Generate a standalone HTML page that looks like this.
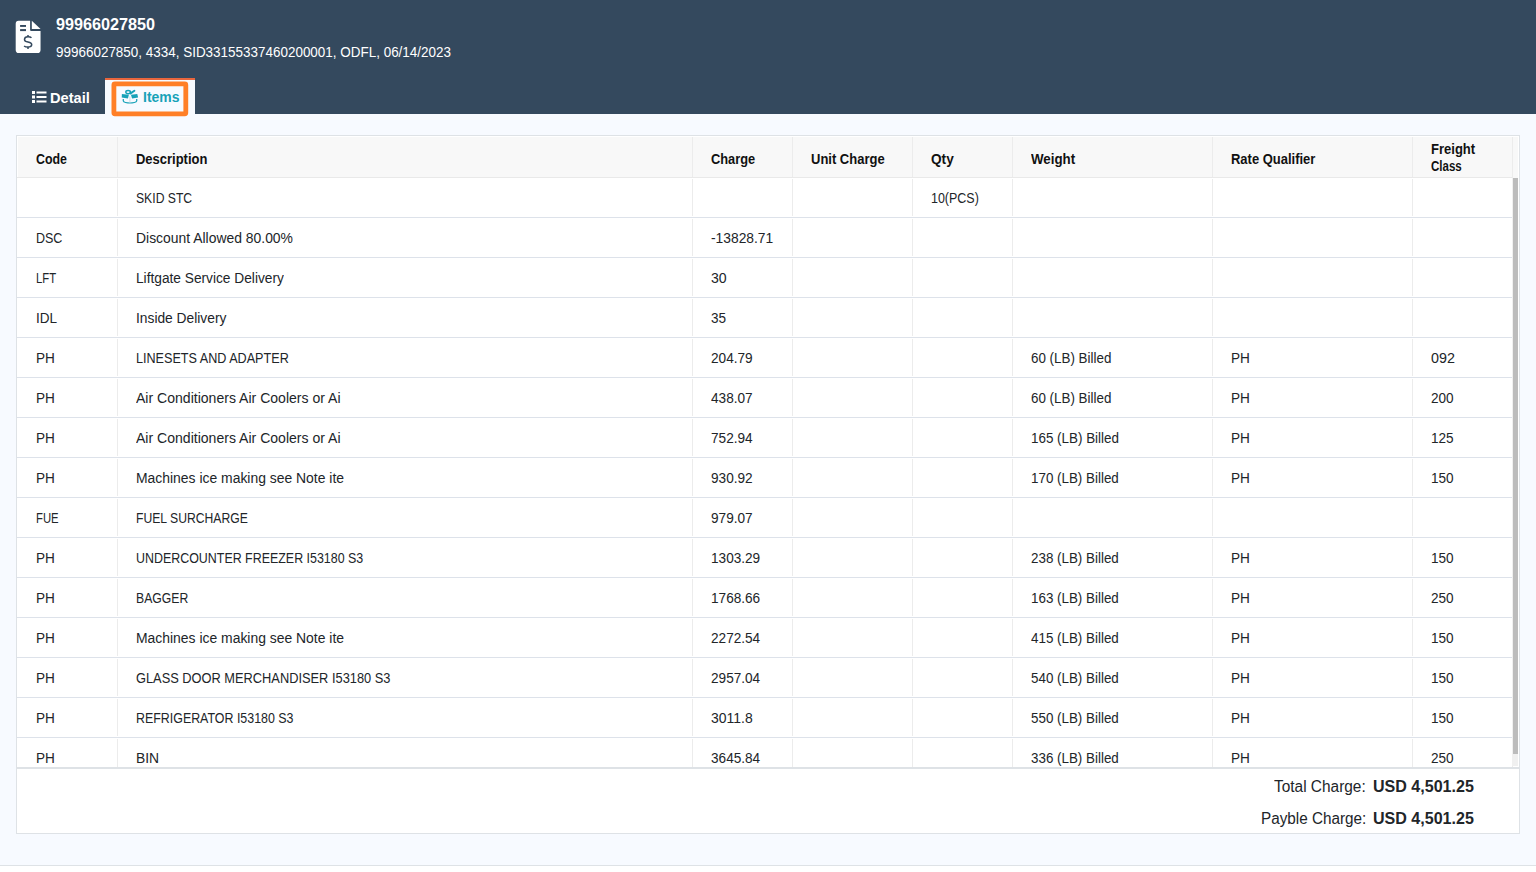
<!DOCTYPE html>
<html><head><meta charset="utf-8">
<style>
*{box-sizing:border-box}
html,body{margin:0;padding:0;width:1536px;height:872px;overflow:hidden;background:#fff;font-family:"Liberation Sans",sans-serif;color:#212529}
.s{display:inline-block;transform-origin:0 0;white-space:nowrap}
.ab{position:absolute;line-height:1;white-space:nowrap}
.page{position:absolute;left:0;top:0;width:1536px;height:866px;background:#f7faff;border-bottom:1px solid #dee2e6}
.hdr{position:absolute;left:0;top:0;width:1536px;height:114px;background:#34495e;color:#fff}
.inv{position:absolute;left:12px;top:18px}
.tab-items{position:absolute;left:105px;top:78px;width:90px;height:36px;background:#f7faff;border-top:2px solid #e8663d}
.focus{position:absolute;left:0;top:0}
.boxic{position:absolute;left:118px;top:86px}
.card{position:absolute;left:16px;top:135px;width:1504px;height:699px;background:#fff;border:1px solid #dee2e6}
.thead{position:absolute;left:1px;top:1px;width:1500px;height:41px;background:#f8f8f8}
.thl{position:absolute;left:0;top:41px;width:1495px;height:1px;background:#e9e9e9}
.hc{position:absolute;font-size:14px;font-weight:bold;line-height:1;white-space:nowrap;padding-left:18.5px;color:#111}
.bc{position:absolute;font-size:14px;line-height:1;white-space:nowrap;padding-left:18.5px}
.vl{position:absolute;width:1px;background:#ececec}
.hl{position:absolute;left:0;width:1495px;height:1px;background:#dde2ea}
.body{position:absolute;left:0;top:0;width:1496px;height:631px;overflow:hidden}
.sb{position:absolute;left:1495px;top:42px;width:6px;height:588px;background:#f0f0f0}
.thumb{position:absolute;left:1px;top:0;width:5px;height:576px;background:#bcbcbc}
.foot{position:absolute;left:0;top:631px;width:1502px;height:2px;background:#dee2e6}
</style></head><body>
<div class="page"></div>
<div class="hdr">
<svg class="inv" width="32" height="38" viewBox="0 0 32 38">
<path fill="#fff" d="M6.6 2.8 H18.1 V11.9 Q18.1 12.9 19.1 12.9 H28.55 V32.0 Q28.55 35.1 25.45 35.1 H6.8 Q3.7 35.1 3.7 32.0 V5.7 Q3.7 2.8 6.6 2.8 Z"/>
<path fill="#fff" d="M19.8 2.8 L28.55 11.1 H19.8 Z"/>
<rect x="8.1" y="7.0" width="5.9" height="1.9" fill="#34495e"/>
<rect x="8.1" y="11.1" width="5.9" height="2.0" fill="#34495e"/>
<path d="M19.5 19.7 Q18.4 18.7 16 18.7 Q12.5 18.7 12.5 21.4 Q12.5 23.4 16 24.0 Q19.7 24.6 19.7 26.6 Q19.7 29.1 16 29.1 Q13.3 29.1 12.1 28.0" fill="none" stroke="#34495e" stroke-width="1.5"/>
<path d="M16 16.9 V18.9 M16 28.9 V31.0" stroke="#34495e" stroke-width="1.5"/>
</svg>
<div class="ab" style="left:56px;top:17px;font-size:16px;font-weight:bold"><span class="s" style="transform:scaleX(1.0125)">99966027850</span></div>
<div class="ab" style="left:56px;top:45px;font-size:14px;font-weight:normal"><span class="s" style="transform:scaleX(0.9610)">99966027850, 4334, SID33155337460200001, ODFL, 06/14/2023</span></div>
<svg width="15" height="12" style="position:absolute;left:32px;top:91px"><rect x="0" y="0" width="3" height="3" fill="#fff"/><rect x="0" y="4.5" width="3" height="3" fill="#fff"/><rect x="0" y="9" width="3" height="3" fill="#fff"/><rect x="4.5" y="0.5" width="10" height="2" fill="#fff"/><rect x="4.5" y="5" width="10" height="2" fill="#fff"/><rect x="4.5" y="9.5" width="10" height="2" fill="#fff"/></svg>
<div class="ab" style="left:50px;top:90.7px;font-size:14px;font-weight:bold"><span class="s" style="transform:scaleX(1.0444)">Detail</span></div>
</div>
<div class="tab-items"></div>
<svg class="boxic" width="24" height="22" viewBox="0 0 24 22">
<ellipse cx="10.1" cy="6.1" rx="2.3" ry="1.65" fill="none" stroke="#17a2b8" stroke-width="1.45"/>
<path d="M12.5 7.4 L16.4 4.7" stroke="#17a2b8" stroke-width="2.0" stroke-linecap="round"/>
<g fill="#17a2b8">
<path d="M3.9 8.1 L10.9 8.7 L9.9 12.6 L3.7 11.6 Z"/>
<path d="M12.9 8.7 L19.3 8.1 L20.1 11.6 L14.1 12.6 Z"/>
</g>
<path d="M5.3 12.9 V14.9 Q5.5 16.0 7.5 16.5 Q11.9 17.5 16.4 16.5 Q18.5 16.0 18.7 14.9 V12.9" fill="none" stroke="#17a2b8" stroke-width="1.25"/>
<path d="M11.9 10.4 V16.6" stroke="#bcd3dc" stroke-width="0.7"/>
</svg>
<div class="ab" style="left:143px;top:90px;font-size:14px;font-weight:bold;color:#17a2b8"><span class="s" style="transform:scaleX(0.9971)">Items</span></div>
<svg class="focus" width="200" height="130"><rect x="113.9" y="83.9" width="71.9" height="29.9" rx="1" fill="none" stroke="#ff7f27" stroke-width="4.8"/></svg>
<div class="card">
 <div class="thead"><div class="hc" style="left:-1px;width:100px;top:15px"><span class="s" style="transform:scaleX(0.8824)">Code</span></div><div class="vl" style="left:99px;top:0px;height:41px"></div><div class="hc" style="left:99.2px;width:574px;top:15px"><span class="s" style="transform:scaleX(0.9267)">Description</span></div><div class="vl" style="left:674px;top:0px;height:41px"></div><div class="hc" style="left:674.2px;width:99px;top:15px"><span class="s" style="transform:scaleX(0.9149)">Charge</span></div><div class="vl" style="left:774px;top:0px;height:41px"></div><div class="hc" style="left:774.2px;width:119px;top:15px"><span class="s" style="transform:scaleX(0.9282)">Unit Charge</span></div><div class="vl" style="left:894px;top:0px;height:41px"></div><div class="hc" style="left:894.2px;width:99px;top:15px"><span class="s" style="transform:scaleX(0.9727)">Qty</span></div><div class="vl" style="left:994px;top:0px;height:41px"></div><div class="hc" style="left:994.2px;width:199px;top:15px"><span class="s" style="transform:scaleX(0.9511)">Weight</span></div><div class="vl" style="left:1194px;top:0px;height:41px"></div><div class="hc" style="left:1194.2px;width:199px;top:15px"><span class="s" style="transform:scaleX(0.9267)">Rate Qualifier</span></div><div class="vl" style="left:1394px;top:0px;height:41px"></div><div class="hc" style="left:1394.7px;width:99px;top:4.4px;line-height:16.5px"><span class="s" style="transform:scaleX(0.9304)">Freight</span><br><span class="s" style="transform:scaleX(0.8222)">Class</span></div><div class="vl" style="left:1494px;top:0px;height:41px"></div></div>
 <div class="thl"></div>
 <div class="body"><div class="vl" style="left:100px;top:43px;height:37px"></div><div class="bc" style="left:100.2px;top:55px"><span class="s" style="transform:scaleX(0.8698)">SKID STC</span></div><div class="vl" style="left:675px;top:43px;height:37px"></div><div class="vl" style="left:775px;top:43px;height:37px"></div><div class="vl" style="left:895px;top:43px;height:37px"></div><div class="bc" style="left:895.2px;top:55px"><span class="s" style="transform:scaleX(0.8904)">10(PCS)</span></div><div class="vl" style="left:995px;top:43px;height:37px"></div><div class="vl" style="left:1195px;top:43px;height:37px"></div><div class="vl" style="left:1395px;top:43px;height:37px"></div><div class="vl" style="left:1495px;top:43px;height:37px"></div><div class="hl" style="top:81px"></div><div class="bc" style="left:0px;top:95px"><span class="s" style="transform:scaleX(0.8929)">DSC</span></div><div class="vl" style="left:100px;top:83px;height:37px"></div><div class="bc" style="left:100.2px;top:95px"><span class="s" style="transform:scaleX(0.9936)">Discount Allowed 80.00%</span></div><div class="vl" style="left:675px;top:83px;height:37px"></div><div class="bc" style="left:675.2px;top:95px"><span class="s" style="transform:scaleX(0.9869)">-13828.71</span></div><div class="vl" style="left:775px;top:83px;height:37px"></div><div class="vl" style="left:895px;top:83px;height:37px"></div><div class="vl" style="left:995px;top:83px;height:37px"></div><div class="vl" style="left:1195px;top:83px;height:37px"></div><div class="vl" style="left:1395px;top:83px;height:37px"></div><div class="vl" style="left:1495px;top:83px;height:37px"></div><div class="hl" style="top:121px"></div><div class="bc" style="left:0px;top:135px"><span class="s" style="transform:scaleX(0.8083)">LFT</span></div><div class="vl" style="left:100px;top:123px;height:37px"></div><div class="bc" style="left:100.2px;top:135px"><span class="s" style="transform:scaleX(0.9793)">Liftgate Service Delivery</span></div><div class="vl" style="left:675px;top:123px;height:37px"></div><div class="bc" style="left:675.2px;top:135px"><span class="s" style="transform:scaleX(1.0071)">30</span></div><div class="vl" style="left:775px;top:123px;height:37px"></div><div class="vl" style="left:895px;top:123px;height:37px"></div><div class="vl" style="left:995px;top:123px;height:37px"></div><div class="vl" style="left:1195px;top:123px;height:37px"></div><div class="vl" style="left:1395px;top:123px;height:37px"></div><div class="vl" style="left:1495px;top:123px;height:37px"></div><div class="hl" style="top:161px"></div><div class="bc" style="left:0px;top:175px"><span class="s" style="transform:scaleX(0.9650)">IDL</span></div><div class="vl" style="left:100px;top:163px;height:37px"></div><div class="bc" style="left:100.2px;top:175px"><span class="s" style="transform:scaleX(0.9846)">Inside Delivery</span></div><div class="vl" style="left:675px;top:163px;height:37px"></div><div class="bc" style="left:675.2px;top:175px"><span class="s" style="transform:scaleX(0.9698)">35</span></div><div class="vl" style="left:775px;top:163px;height:37px"></div><div class="vl" style="left:895px;top:163px;height:37px"></div><div class="vl" style="left:995px;top:163px;height:37px"></div><div class="vl" style="left:1195px;top:163px;height:37px"></div><div class="vl" style="left:1395px;top:163px;height:37px"></div><div class="vl" style="left:1495px;top:163px;height:37px"></div><div class="hl" style="top:201px"></div><div class="bc" style="left:0px;top:215px"><span class="s" style="transform:scaleX(0.9706)">PH</span></div><div class="vl" style="left:100px;top:203px;height:37px"></div><div class="bc" style="left:100.2px;top:215px"><span class="s" style="transform:scaleX(0.9006)">LINESETS AND ADAPTER</span></div><div class="vl" style="left:675px;top:203px;height:37px"></div><div class="bc" style="left:675.2px;top:215px"><span class="s" style="transform:scaleX(0.9732)">204.79</span></div><div class="vl" style="left:775px;top:203px;height:37px"></div><div class="vl" style="left:895px;top:203px;height:37px"></div><div class="vl" style="left:995px;top:203px;height:37px"></div><div class="bc" style="left:995.2px;top:215px"><span class="s" style="transform:scaleX(0.9561)">60 (LB) Billed</span></div><div class="vl" style="left:1195px;top:203px;height:37px"></div><div class="bc" style="left:1195.2px;top:215px"><span class="s" style="transform:scaleX(0.9706)">PH</span></div><div class="vl" style="left:1395px;top:203px;height:37px"></div><div class="bc" style="left:1395.2px;top:215px"><span class="s" style="transform:scaleX(1.0227)">092</span></div><div class="vl" style="left:1495px;top:203px;height:37px"></div><div class="hl" style="top:241px"></div><div class="bc" style="left:0px;top:255px"><span class="s" style="transform:scaleX(0.9706)">PH</span></div><div class="vl" style="left:100px;top:243px;height:37px"></div><div class="bc" style="left:100.2px;top:255px"><span class="s" style="transform:scaleX(1.0034)">Air Conditioners Air Coolers or Ai</span></div><div class="vl" style="left:675px;top:243px;height:37px"></div><div class="bc" style="left:675.2px;top:255px"><span class="s" style="transform:scaleX(0.9724)">438.07</span></div><div class="vl" style="left:775px;top:243px;height:37px"></div><div class="vl" style="left:895px;top:243px;height:37px"></div><div class="vl" style="left:995px;top:243px;height:37px"></div><div class="bc" style="left:995.2px;top:255px"><span class="s" style="transform:scaleX(0.9561)">60 (LB) Billed</span></div><div class="vl" style="left:1195px;top:243px;height:37px"></div><div class="bc" style="left:1195.2px;top:255px"><span class="s" style="transform:scaleX(0.9706)">PH</span></div><div class="vl" style="left:1395px;top:243px;height:37px"></div><div class="bc" style="left:1395.2px;top:255px"><span class="s" style="transform:scaleX(0.9698)">200</span></div><div class="vl" style="left:1495px;top:243px;height:37px"></div><div class="hl" style="top:281px"></div><div class="bc" style="left:0px;top:295px"><span class="s" style="transform:scaleX(0.9706)">PH</span></div><div class="vl" style="left:100px;top:283px;height:37px"></div><div class="bc" style="left:100.2px;top:295px"><span class="s" style="transform:scaleX(1.0034)">Air Conditioners Air Coolers or Ai</span></div><div class="vl" style="left:675px;top:283px;height:37px"></div><div class="bc" style="left:675.2px;top:295px"><span class="s" style="transform:scaleX(0.9724)">752.94</span></div><div class="vl" style="left:775px;top:283px;height:37px"></div><div class="vl" style="left:895px;top:283px;height:37px"></div><div class="vl" style="left:995px;top:283px;height:37px"></div><div class="bc" style="left:995.2px;top:295px"><span class="s" style="transform:scaleX(0.9578)">165 (LB) Billed</span></div><div class="vl" style="left:1195px;top:283px;height:37px"></div><div class="bc" style="left:1195.2px;top:295px"><span class="s" style="transform:scaleX(0.9706)">PH</span></div><div class="vl" style="left:1395px;top:283px;height:37px"></div><div class="bc" style="left:1395.2px;top:295px"><span class="s" style="transform:scaleX(0.9698)">125</span></div><div class="vl" style="left:1495px;top:283px;height:37px"></div><div class="hl" style="top:321px"></div><div class="bc" style="left:0px;top:335px"><span class="s" style="transform:scaleX(0.9706)">PH</span></div><div class="vl" style="left:100px;top:323px;height:37px"></div><div class="bc" style="left:100.2px;top:335px"><span class="s" style="transform:scaleX(0.9937)">Machines ice making see Note ite</span></div><div class="vl" style="left:675px;top:323px;height:37px"></div><div class="bc" style="left:675.2px;top:335px"><span class="s" style="transform:scaleX(0.9724)">930.92</span></div><div class="vl" style="left:775px;top:323px;height:37px"></div><div class="vl" style="left:895px;top:323px;height:37px"></div><div class="vl" style="left:995px;top:323px;height:37px"></div><div class="bc" style="left:995.2px;top:335px"><span class="s" style="transform:scaleX(0.9559)">170 (LB) Billed</span></div><div class="vl" style="left:1195px;top:323px;height:37px"></div><div class="bc" style="left:1195.2px;top:335px"><span class="s" style="transform:scaleX(0.9706)">PH</span></div><div class="vl" style="left:1395px;top:323px;height:37px"></div><div class="bc" style="left:1395.2px;top:335px"><span class="s" style="transform:scaleX(0.9698)">150</span></div><div class="vl" style="left:1495px;top:323px;height:37px"></div><div class="hl" style="top:361px"></div><div class="bc" style="left:0px;top:375px"><span class="s" style="transform:scaleX(0.8074)">FUE</span></div><div class="vl" style="left:100px;top:363px;height:37px"></div><div class="bc" style="left:100.2px;top:375px"><span class="s" style="transform:scaleX(0.8693)">FUEL SURCHARGE</span></div><div class="vl" style="left:675px;top:363px;height:37px"></div><div class="bc" style="left:675.2px;top:375px"><span class="s" style="transform:scaleX(0.9724)">979.07</span></div><div class="vl" style="left:775px;top:363px;height:37px"></div><div class="vl" style="left:895px;top:363px;height:37px"></div><div class="vl" style="left:995px;top:363px;height:37px"></div><div class="vl" style="left:1195px;top:363px;height:37px"></div><div class="vl" style="left:1395px;top:363px;height:37px"></div><div class="vl" style="left:1495px;top:363px;height:37px"></div><div class="hl" style="top:401px"></div><div class="bc" style="left:0px;top:415px"><span class="s" style="transform:scaleX(0.9706)">PH</span></div><div class="vl" style="left:100px;top:403px;height:37px"></div><div class="bc" style="left:100.2px;top:415px"><span class="s" style="transform:scaleX(0.8878)">UNDERCOUNTER FREEZER I53180 S3</span></div><div class="vl" style="left:675px;top:403px;height:37px"></div><div class="bc" style="left:675.2px;top:415px"><span class="s" style="transform:scaleX(0.9720)">1303.29</span></div><div class="vl" style="left:775px;top:403px;height:37px"></div><div class="vl" style="left:895px;top:403px;height:37px"></div><div class="vl" style="left:995px;top:403px;height:37px"></div><div class="bc" style="left:995.2px;top:415px"><span class="s" style="transform:scaleX(0.9559)">238 (LB) Billed</span></div><div class="vl" style="left:1195px;top:403px;height:37px"></div><div class="bc" style="left:1195.2px;top:415px"><span class="s" style="transform:scaleX(0.9706)">PH</span></div><div class="vl" style="left:1395px;top:403px;height:37px"></div><div class="bc" style="left:1395.2px;top:415px"><span class="s" style="transform:scaleX(0.9698)">150</span></div><div class="vl" style="left:1495px;top:403px;height:37px"></div><div class="hl" style="top:441px"></div><div class="bc" style="left:0px;top:455px"><span class="s" style="transform:scaleX(0.9706)">PH</span></div><div class="vl" style="left:100px;top:443px;height:37px"></div><div class="bc" style="left:100.2px;top:455px"><span class="s" style="transform:scaleX(0.8724)">BAGGER</span></div><div class="vl" style="left:675px;top:443px;height:37px"></div><div class="bc" style="left:675.2px;top:455px"><span class="s" style="transform:scaleX(0.9720)">1768.66</span></div><div class="vl" style="left:775px;top:443px;height:37px"></div><div class="vl" style="left:895px;top:443px;height:37px"></div><div class="vl" style="left:995px;top:443px;height:37px"></div><div class="bc" style="left:995.2px;top:455px"><span class="s" style="transform:scaleX(0.9559)">163 (LB) Billed</span></div><div class="vl" style="left:1195px;top:443px;height:37px"></div><div class="bc" style="left:1195.2px;top:455px"><span class="s" style="transform:scaleX(0.9706)">PH</span></div><div class="vl" style="left:1395px;top:443px;height:37px"></div><div class="bc" style="left:1395.2px;top:455px"><span class="s" style="transform:scaleX(0.9698)">250</span></div><div class="vl" style="left:1495px;top:443px;height:37px"></div><div class="hl" style="top:481px"></div><div class="bc" style="left:0px;top:495px"><span class="s" style="transform:scaleX(0.9706)">PH</span></div><div class="vl" style="left:100px;top:483px;height:37px"></div><div class="bc" style="left:100.2px;top:495px"><span class="s" style="transform:scaleX(0.9937)">Machines ice making see Note ite</span></div><div class="vl" style="left:675px;top:483px;height:37px"></div><div class="bc" style="left:675.2px;top:495px"><span class="s" style="transform:scaleX(0.9720)">2272.54</span></div><div class="vl" style="left:775px;top:483px;height:37px"></div><div class="vl" style="left:895px;top:483px;height:37px"></div><div class="vl" style="left:995px;top:483px;height:37px"></div><div class="bc" style="left:995.2px;top:495px"><span class="s" style="transform:scaleX(0.9559)">415 (LB) Billed</span></div><div class="vl" style="left:1195px;top:483px;height:37px"></div><div class="bc" style="left:1195.2px;top:495px"><span class="s" style="transform:scaleX(0.9706)">PH</span></div><div class="vl" style="left:1395px;top:483px;height:37px"></div><div class="bc" style="left:1395.2px;top:495px"><span class="s" style="transform:scaleX(0.9698)">150</span></div><div class="vl" style="left:1495px;top:483px;height:37px"></div><div class="hl" style="top:521px"></div><div class="bc" style="left:0px;top:535px"><span class="s" style="transform:scaleX(0.9706)">PH</span></div><div class="vl" style="left:100px;top:523px;height:37px"></div><div class="bc" style="left:100.2px;top:535px"><span class="s" style="transform:scaleX(0.9159)">GLASS DOOR MERCHANDISER I53180 S3</span></div><div class="vl" style="left:675px;top:523px;height:37px"></div><div class="bc" style="left:675.2px;top:535px"><span class="s" style="transform:scaleX(0.9720)">2957.04</span></div><div class="vl" style="left:775px;top:523px;height:37px"></div><div class="vl" style="left:895px;top:523px;height:37px"></div><div class="vl" style="left:995px;top:523px;height:37px"></div><div class="bc" style="left:995.2px;top:535px"><span class="s" style="transform:scaleX(0.9559)">540 (LB) Billed</span></div><div class="vl" style="left:1195px;top:523px;height:37px"></div><div class="bc" style="left:1195.2px;top:535px"><span class="s" style="transform:scaleX(0.9706)">PH</span></div><div class="vl" style="left:1395px;top:523px;height:37px"></div><div class="bc" style="left:1395.2px;top:535px"><span class="s" style="transform:scaleX(0.9698)">150</span></div><div class="vl" style="left:1495px;top:523px;height:37px"></div><div class="hl" style="top:561px"></div><div class="bc" style="left:0px;top:575px"><span class="s" style="transform:scaleX(0.9706)">PH</span></div><div class="vl" style="left:100px;top:563px;height:37px"></div><div class="bc" style="left:100.2px;top:575px"><span class="s" style="transform:scaleX(0.8864)">REFRIGERATOR I53180 S3</span></div><div class="vl" style="left:675px;top:563px;height:37px"></div><div class="bc" style="left:675.2px;top:575px"><span class="s" style="transform:scaleX(0.9966)">3011.8</span></div><div class="vl" style="left:775px;top:563px;height:37px"></div><div class="vl" style="left:895px;top:563px;height:37px"></div><div class="vl" style="left:995px;top:563px;height:37px"></div><div class="bc" style="left:995.2px;top:575px"><span class="s" style="transform:scaleX(0.9559)">550 (LB) Billed</span></div><div class="vl" style="left:1195px;top:563px;height:37px"></div><div class="bc" style="left:1195.2px;top:575px"><span class="s" style="transform:scaleX(0.9706)">PH</span></div><div class="vl" style="left:1395px;top:563px;height:37px"></div><div class="bc" style="left:1395.2px;top:575px"><span class="s" style="transform:scaleX(0.9698)">150</span></div><div class="vl" style="left:1495px;top:563px;height:37px"></div><div class="hl" style="top:601px"></div><div class="bc" style="left:0px;top:615px"><span class="s" style="transform:scaleX(0.9706)">PH</span></div><div class="vl" style="left:100px;top:603px;height:37px"></div><div class="bc" style="left:100.2px;top:615px"><span class="s" style="transform:scaleX(0.9905)">BIN</span></div><div class="vl" style="left:675px;top:603px;height:37px"></div><div class="bc" style="left:675.2px;top:615px"><span class="s" style="transform:scaleX(0.9720)">3645.84</span></div><div class="vl" style="left:775px;top:603px;height:37px"></div><div class="vl" style="left:895px;top:603px;height:37px"></div><div class="vl" style="left:995px;top:603px;height:37px"></div><div class="bc" style="left:995.2px;top:615px"><span class="s" style="transform:scaleX(0.9559)">336 (LB) Billed</span></div><div class="vl" style="left:1195px;top:603px;height:37px"></div><div class="bc" style="left:1195.2px;top:615px"><span class="s" style="transform:scaleX(0.9706)">PH</span></div><div class="vl" style="left:1395px;top:603px;height:37px"></div><div class="bc" style="left:1395.2px;top:615px"><span class="s" style="transform:scaleX(0.9698)">250</span></div><div class="vl" style="left:1495px;top:603px;height:37px"></div><div class="hl" style="top:641px"></div></div>
 <div class="sb"><div class="thumb"></div></div>
 <div class="foot"></div>
 <div class="ab" style="left:1257px;top:643px;font-size:16px;font-weight:normal"><span class="s" style="transform:scaleX(0.9638)">Total Charge:</span></div>
 <div class="ab" style="left:1356px;top:643px;font-size:16px;font-weight:bold"><span class="s" style="transform:scaleX(1.0030)">USD 4,501.25</span></div>
 <div class="ab" style="left:1244px;top:675px;font-size:16px;font-weight:normal"><span class="s" style="transform:scaleX(0.9546)">Payble Charge:</span></div>
 <div class="ab" style="left:1356px;top:675px;font-size:16px;font-weight:bold"><span class="s" style="transform:scaleX(1.0030)">USD 4,501.25</span></div>
</div>
</body></html>
